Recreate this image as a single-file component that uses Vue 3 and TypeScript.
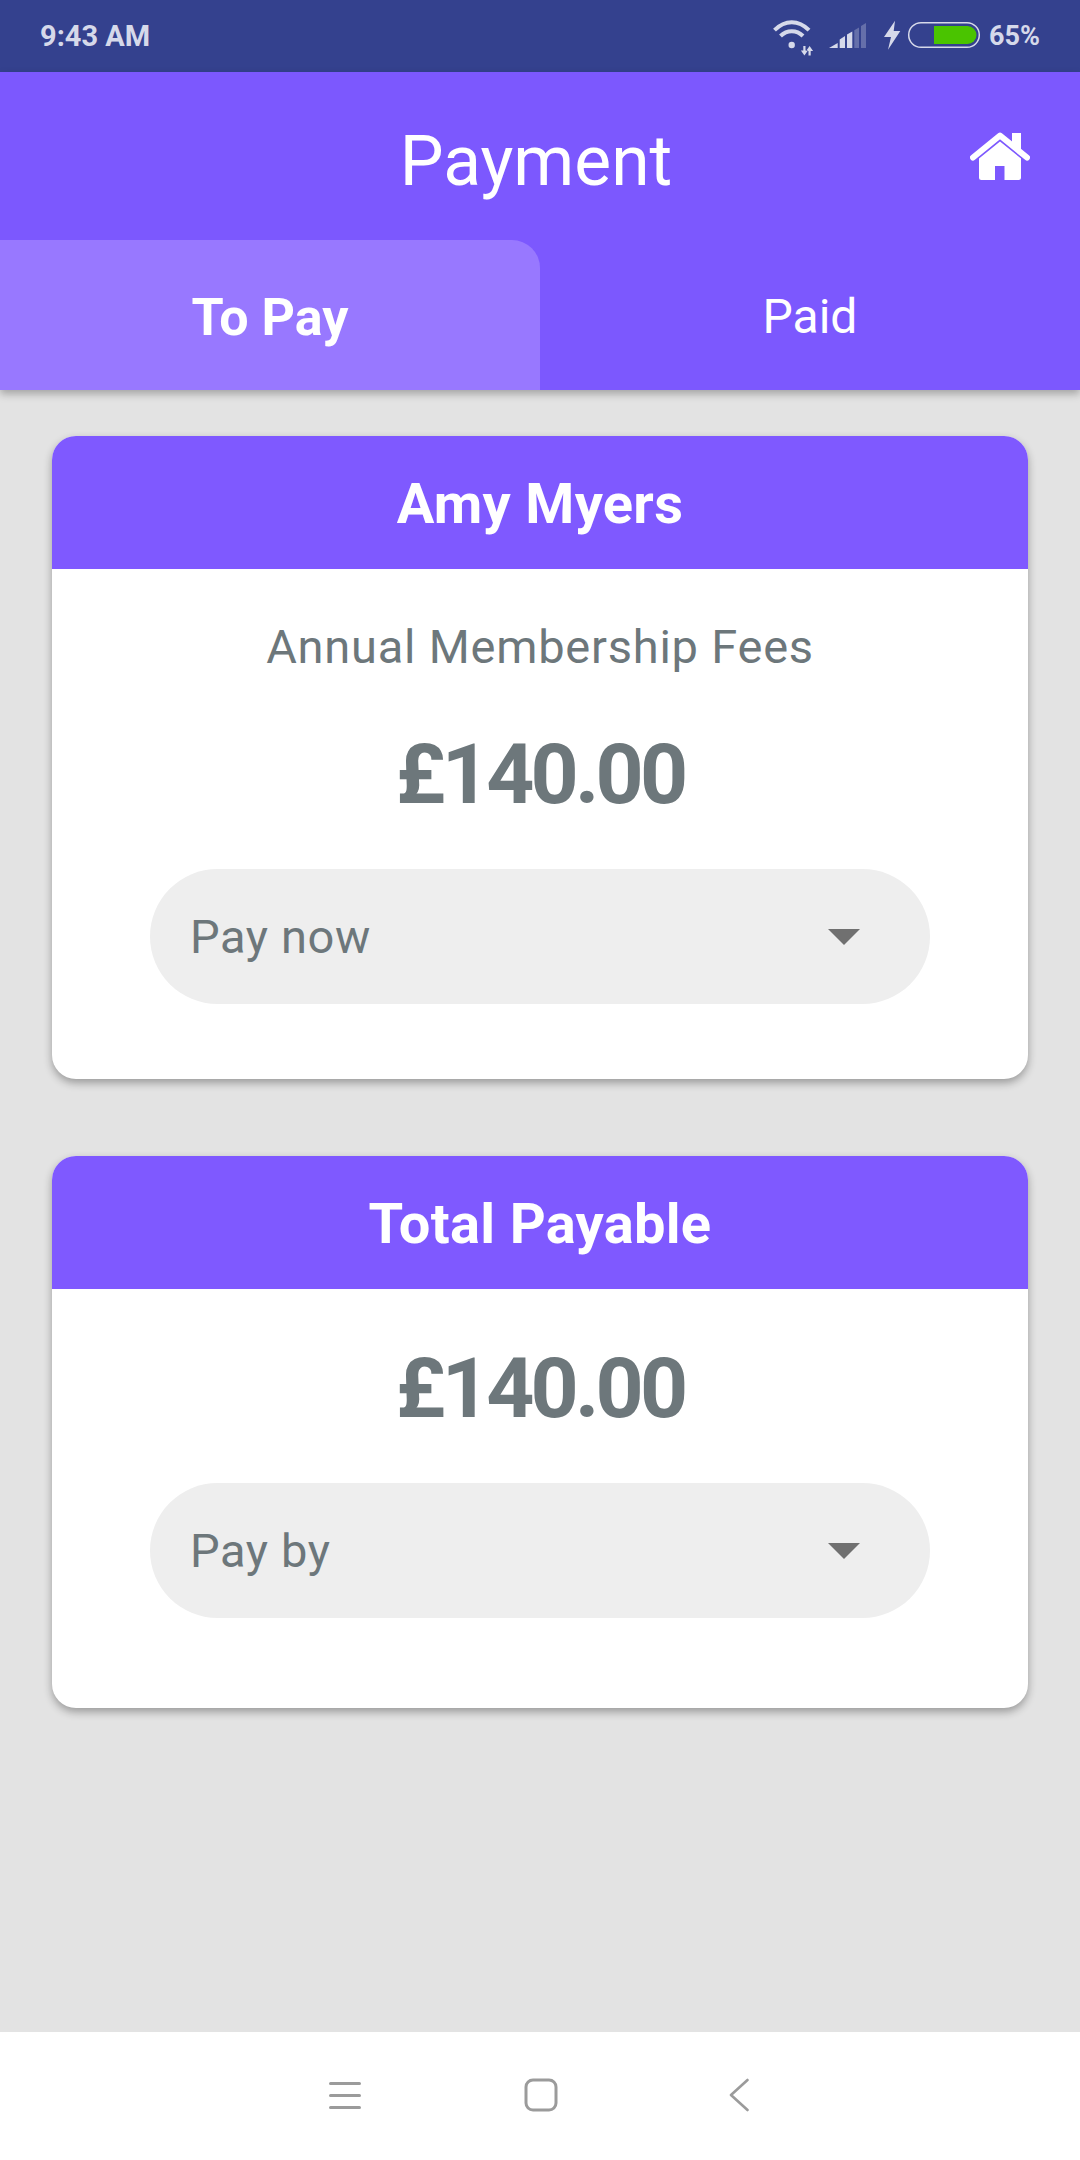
<script setup lang="ts">
interface Card {
  title: string
  desc?: string
  amount: string
  select: string
}
const cards: Card[] = [
  { title: 'Amy Myers', desc: 'Annual Membership Fees', amount: '£140.00', select: 'Pay now' },
  { title: 'Total Payable', amount: '£140.00', select: 'Pay by' },
]
</script>

<template>
  <div class="screen">
    <div class="status">
      <span class="time">9:43 AM</span>
      <div class="status-right">
        <svg class="status-icons" width="212" height="45" viewBox="30 15 212 45">
          <g fill="none" stroke="#d6d9ea" stroke-width="4">
            <path d="M33.500 31.200C44 20.600 57.500 20.600 68 31.200" />
            <path d="M39.500 37C46 30.500 55.500 30.500 62 37" />
          </g>
          <circle cx="50.700" cy="46" r="3.200" fill="#d6d9ea" />
          <path d="M62.300 47h2.200v4.500h2.400l-3.500 5-3.500-5h2.400zM67.500 56.500h2.200V52h2.400l-3.500-5-3.500 5h2.400z" fill="#d6d9ea" />
          <path d="M88 49l8.700-5v5zM98.700 49v-8.600l5.300-3.400v12zM106 49V35.600l5.300-3.100V49z" fill="#d6d9ea" />
          <path d="M113.300 49V31.200l4.700-2.700V49zM120 49V27l5-3v25z" fill="#d6d9ea" opacity=".3" />
          <path d="M154 21.700L143 38h7l-3 12.700L159.300 32h-6.600z" fill="#d6d9ea" />
          <rect x="167.700" y="23.700" width="70.600" height="24.600" rx="12.300" fill="none" stroke="#d6d9ea" stroke-width="1.500" />
          <path d="M193 27h33.500a9 9 0 0 1 0 18H193z" fill="#4ac400" />
        </svg>
        <span class="battery">65%</span>
      </div>
    </div>

    <header class="header">
      <div class="title-row">
        <h1 class="title">Payment</h1>
        <svg class="home" width="60" height="50" viewBox="20 10 60 50">
          <path d="M62 13h9v16h-9z" fill="#fff" />
          <path d="M23 37.500L50 15.500l27 22" fill="none" stroke="#fff" stroke-width="6" stroke-linecap="round" stroke-linejoin="round" />
          <path d="M29 38.500L50 21.500l21 17V57.500a2.500 2.500 0 0 1-2.500 2.500H54.500V46h-9.500v14H31.500a2.500 2.500 0 0 1-2.500-2.500z" fill="#fff" />
        </svg>
      </div>
      <div class="tabs">
        <div class="tab active"><span class="tab-label">To Pay</span></div>
        <div class="tab"><span class="tab-label">Paid</span></div>
      </div>
    </header>

    <main class="main">
      <section v-for="card in cards" :key="card.title" class="card" :class="{ 'card-total': !card.desc }">
        <div class="card-head">{{ card.title }}</div>
        <div class="card-body">
          <p v-if="card.desc" class="desc">{{ card.desc }}</p>
          <p class="amount">{{ card.amount }}</p>
          <div class="select">
            <span>{{ card.select }}</span>
            <span class="caret"></span>
          </div>
        </div>
      </section>
    </main>

    <nav class="nav">
      <svg width="32" height="28" viewBox="0 0 32 28">
        <path d="M1.500 2.500h29M1.500 14.500h29M1.500 26.500h29" fill="none" stroke="#9b9b9b" stroke-width="3" stroke-linecap="round" />
      </svg>
      <svg width="34" height="34" viewBox="0 0 34 34">
        <rect x="2" y="2" width="30" height="30" rx="7" fill="none" stroke="#9b9b9b" stroke-width="3" />
      </svg>
      <svg width="20" height="34" viewBox="0 0 20 34">
        <path d="M18.500 2L2 17l16.500 15" fill="none" stroke="#9b9b9b" stroke-width="2.600" stroke-linecap="round" stroke-linejoin="round" />
      </svg>
    </nav>
  </div>
</template>

<style>
html, body {
  margin: 0;
  padding: 0;
}
</style>

<style scoped>
.screen {
  width: 1080px;
  height: 2160px;
  display: flex;
  flex-direction: column;
  background: #e3e3e3;
  font-family: Roboto, "Liberation Sans", sans-serif;
  overflow: hidden;
}
.status {
  height: 72px;
  flex: none;
  background: #34418e;
  display: flex;
  align-items: center;
  justify-content: space-between;
  padding: 0 40px;
  box-sizing: border-box;
  color: #d6d9ea;
  font-size: 29px;
  font-weight: 700;
}
.status-right {
  display: flex;
  align-items: center;
  gap: 6px;
}
.status-icons {
  display: block;
}
.battery {
  font-size: 27px;
}
.header {
  background: #7c58fe;
  flex: none;
  position: relative;
  z-index: 1;
  box-shadow: 0 4px 8px rgba(0, 0, 0, 0.28);
}
.title-row {
  height: 168px;
  position: relative;
  display: flex;
  justify-content: center;
  align-items: center;
}
.title {
  margin: 0;
  font-size: 69.500px;
  font-weight: 400;
  color: #fff;
  position: relative;
  left: -4px;
  top: 5px;
}
.home {
  position: absolute;
  right: 50px;
  top: 58px;
}
.tabs {
  display: flex;
  height: 150px;
}
.tab {
  width: 540px;
  display: flex;
  align-items: center;
  justify-content: center;
  color: #fff;
  font-size: 48px;
  font-weight: 400;
}
.tab-label {
  padding-top: 2px;
}
.tab.active {
  background: #9878ff;
  border-top-right-radius: 28px;
  font-size: 52px;
  font-weight: 700;
}
.tab.active .tab-label {
  padding-top: 4px;
}
.main {
  flex: 1;
  display: flex;
  flex-direction: column;
  align-items: center;
  gap: 77px;
  padding-top: 46px;
}
.card {
  width: 976px;
  background: #fff;
  border-radius: 24px;
  overflow: hidden;
  box-shadow: 0 4px 8px rgba(0, 0, 0, 0.32);
}
.card-head {
  height: 133px;
  background: #7f59ff;
  color: #fff;
  font-size: 56px;
  font-weight: 700;
  letter-spacing: 0.300px;
  display: flex;
  align-items: center;
  justify-content: center;
  padding-top: 2px;
  box-sizing: border-box;
}
.card-body {
  display: flex;
  flex-direction: column;
  align-items: center;
  padding: 48px 98px 75px;
}
.card-total .card-body {
  padding-bottom: 90px;
}
.desc {
  margin: 0 0 46px;
  line-height: 60px;
  font-size: 47px;
  letter-spacing: 0.770px;
  color: #6d777b;
}
.amount {
  margin: 0 0 46px;
  padding-top: 2px;
  height: 98px;
  line-height: 100px;
  font-size: 84px;
  font-weight: 700;
  letter-spacing: -3.800px;
  color: #6d777b;
}
.select {
  width: 780px;
  height: 135px;
  box-sizing: border-box;
  border-radius: 67.500px;
  background: #eeeeee;
  padding: 0 70px 0 40px;
  display: flex;
  align-items: center;
  justify-content: space-between;
  font-size: 47px;
  letter-spacing: 0.600px;
  color: #6d777b;
}
.caret {
  width: 0;
  height: 0;
  border-left: 16px solid transparent;
  border-right: 16px solid transparent;
  border-top: 16px solid #707070;
}
.nav {
  height: 129px;
  flex: none;
  box-sizing: border-box;
  background: #fff;
  border-top: 1px solid #e3e3e3;
  padding-bottom: 2px;
  padding-right: 2px;
  display: flex;
  align-items: center;
  justify-content: center;
}
.nav svg:nth-child(1) {
  margin-right: 163px;
}
.nav svg:nth-child(2) {
  margin-right: 171px;
}
</style>
